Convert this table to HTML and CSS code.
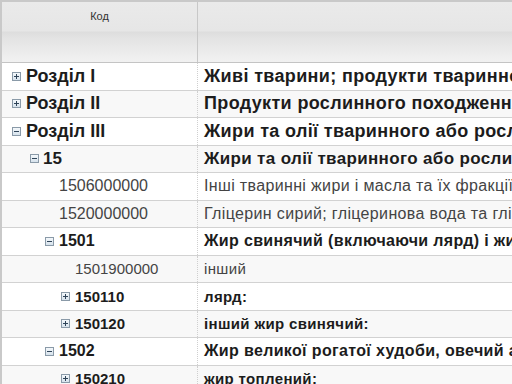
FILE: index.html
```html
<!DOCTYPE html>
<html lang="uk">
<head>
<meta charset="utf-8">
<link rel="stylesheet" href="styles.css">
</head>
<body>
<div class="grid">
  <div class="head">
    <div class="hcell code-h"><span class="htitle">Код</span></div>
    <div class="hcell name-h"></div>
  </div>
  <div class="row">
    <div class="code l0"><span class="tg plus"></span>Розділ I</div>
    <div class="name b18">Живі тварини; продукти тваринного походження</div>
  </div>
  <div class="row alt">
    <div class="code l0"><span class="tg plus"></span>Розділ II</div>
    <div class="name b18">Продукти рослинного походження</div>
  </div>
  <div class="row">
    <div class="code l0"><span class="tg minus"></span>Розділ III</div>
    <div class="name b18">Жири та олії тваринного або рослинного походження та продукти їх розщеплення</div>
  </div>
  <div class="row alt">
    <div class="code l1"><span class="tg minus"></span>15</div>
    <div class="name b17">Жири та олії тваринного або рослинного походження та продукти їх розщеплення</div>
  </div>
  <div class="row">
    <div class="code l2 leaf16"><span class="tg none"></span>1506000000</div>
    <div class="name n16">Інші тваринні жири і масла та їх фракції, рафіновані або нерафіновані</div>
  </div>
  <div class="row alt">
    <div class="code l2 leaf16"><span class="tg none"></span>1520000000</div>
    <div class="name n16">Гліцерин сирий; гліцеринова вода та гліцеринові луги</div>
  </div>
  <div class="row">
    <div class="code l2 c16"><span class="tg minus"></span>1501</div>
    <div class="name b16">Жир свинячий (включаючи лярд) і жир свійської птиці</div>
  </div>
  <div class="row alt">
    <div class="code l3 leaf15"><span class="tg none"></span>1501900000</div>
    <div class="name n15">інший</div>
  </div>
  <div class="row">
    <div class="code l3 c15"><span class="tg plus"></span>150110</div>
    <div class="name b15">лярд:</div>
  </div>
  <div class="row alt">
    <div class="code l3 c15"><span class="tg plus"></span>150120</div>
    <div class="name b15">інший жир свинячий:</div>
  </div>
  <div class="row">
    <div class="code l2 c16"><span class="tg minus"></span>1502</div>
    <div class="name b16">Жир великої рогатої худоби, овечий або козячий</div>
  </div>
  <div class="row alt">
    <div class="code l3 c15"><span class="tg plus"></span>150210</div>
    <div class="name b15">жир топлений:</div>
  </div>
</div>
</body>
</html>
```
FILE: styles.css
```css
html, body {
  margin: 0;
  padding: 0;
  background: #ffffff;
  overflow: hidden;
}
body {
  font-family: "Liberation Sans", Arial, sans-serif;
  color: #1c1c1c;
}
.grid {
  width: 1000px;
  border-left: 2px solid #c9c9c9;
  border-top: 2px solid #c9c9c9;
  box-sizing: border-box;
}
.head {
  display: grid;
  grid-template-columns: 196px 1fr;
  height: 60px;
  border-bottom: 1px solid #c4c4c4;
  background: linear-gradient(to bottom, #eaeaea 0px, #e6e6e6 29px, #dddddd 30px, #e3e3e3 36px, #f1f1f1 59px);
}
.code-h {
  border-right: 1px solid #c8c8c8;
  text-align: center;
}
.htitle {
  display: block;
  padding-top: 8px;
  font-size: 11px;
  color: #333;
}
.row {
  display: grid;
  grid-template-columns: 196px 1fr;
  height: 27.5px;
  box-sizing: border-box;
  border-bottom: 1px solid #d2d2d2;
  background: #ffffff;
  white-space: nowrap;
  overflow: hidden;
}
.row.alt {
  background: #f8f8f8;
}
.code {
  display: flex;
  align-items: center;
  border-right: 1px dotted #cfcfcf;
  font-weight: bold;
  font-size: 18px;
  color: #1c1c1c;
}
.name {
  display: flex;
  align-items: center;
  padding-left: 6px;
  overflow: hidden;
  letter-spacing: 0.35px;
}
.l0 { padding-left: 10px; }
.l1 { padding-left: 28px; }
.l2 { padding-left: 43px; }
.l3 { padding-left: 59px; }
.l1 .tg { margin-right: 4px; }
.leaf16 {
  font-weight: normal;
  font-size: 16px;
  color: #444;
}
.leaf15 {
  font-weight: normal;
  font-size: 15px;
  color: #444;
}
.c16 { font-size: 16px; }
.c15 { font-size: 15px; }
.l1 { font-size: 17px; }
.b18 { font-weight: bold; font-size: 18px; }
.b17 { font-weight: bold; font-size: 17px; }
.b16 { font-weight: bold; font-size: 16px; }
.b15 { font-weight: bold; font-size: 15px; }
.n16 { font-size: 16px; color: #444; }
.n15 { font-size: 15px; color: #444; }
.tg {
  display: inline-block;
  width: 9px;
  height: 9px;
  margin-right: 5px;
  box-sizing: border-box;
  border: 1px solid #8a9aa8;
  background: linear-gradient(to bottom, #f4f8fb, #d6e2ec);
  position: relative;
  flex: none;
}
.tg.none {
  border: none;
  background: none;
}
.tg.plus::before,
.tg.minus::before {
  content: "";
  position: absolute;
  left: 1px;
  top: 3px;
  width: 5px;
  height: 1px;
  background: #2f4458;
}
.tg.plus::after {
  content: "";
  position: absolute;
  left: 3px;
  top: 1px;
  width: 1px;
  height: 5px;
  background: #2f4458;
}
```
